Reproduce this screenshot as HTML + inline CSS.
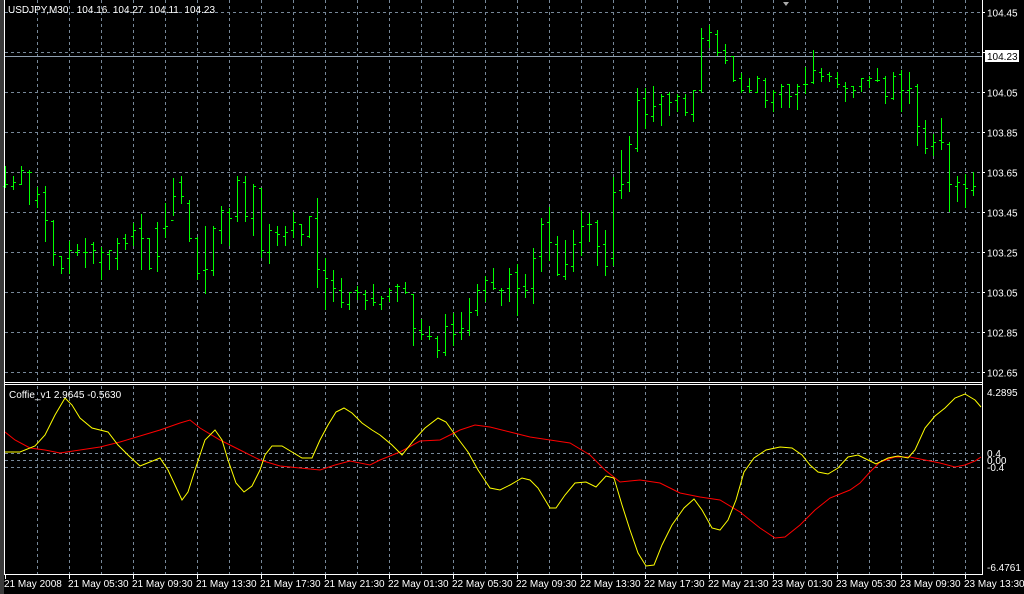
<!DOCTYPE html>
<html><head><meta charset="utf-8"><style>
html,body{margin:0;padding:0;background:#000;width:1024px;height:594px;overflow:hidden}
svg{display:block}
text{font-family:"Liberation Sans",sans-serif;font-size:10px;fill:#fff;white-space:pre}
</style></head><body>
<svg id="s" width="1024" height="594" xmlns="http://www.w3.org/2000/svg">
<rect width="1024" height="594" fill="#000"/>
<rect x="0" y="0" width="4" height="594" fill="#3a3a3a"/>
<g id="grid" stroke="#778899" stroke-width="1" stroke-dasharray="3,3" fill="none"></g>
<line x1="4" y1="56.5" x2="982" y2="56.5" stroke="#8f9fb0" stroke-width="1"/>
<g id="bars" stroke="#00ff00" stroke-width="1" fill="none"></g>
<polyline id="red" fill="none" stroke="#ff0000" stroke-width="1"/>
<polyline id="yel" fill="none" stroke="#ffff00" stroke-width="1"/>
<g stroke="#fff" stroke-width="1" fill="none">
<line x1="4.5" y1="0" x2="4.5" y2="575"/>
<line x1="982.5" y1="0" x2="982.5" y2="575"/>
<line x1="4" y1="382.5" x2="983" y2="382.5"/>
<line x1="4" y1="384.5" x2="983" y2="384.5"/>
<line x1="4" y1="574.5" x2="983" y2="574.5"/>
</g>
<g id="ticks" stroke="#fff"></g>
<text x="8" y="13" xml:space="preserve">USDJPY,M30   104.16  104.27  104.11  104.23</text>
<text x="9" y="398">Coffie_v1 2.9645 -0.5630</text>
<g id="plab"></g>
<rect x="985" y="50" width="34" height="12" fill="#fff"/>
<text x="987" y="60" style="fill:#000">104.23</text>
<text x="987" y="396">4.2895</text>
<text x="987" y="457">0.4</text>
<text x="987" y="464">0.00</text>
<text x="987" y="471">-0.4</text>
<text x="987" y="571">-6.4761</text>
<g id="tlab"></g>
<polygon points="783,2 789,2 786,6" fill="#aaa"/>
</svg>
<script>
var NS="http://www.w3.org/2000/svg";
function el(p,t,a,txt){var e=document.createElementNS(NS,t);for(var k in a)e.setAttribute(k,a[k]);if(txt)e.textContent=txt;document.getElementById(p).appendChild(e);}
for(var x=37;x<982;x+=32){el("grid","line",{x1:x+.5,y1:0,x2:x+.5,y2:381});el("grid","line",{x1:x+.5,y1:386,x2:x+.5,y2:574});}
var pl=["104.45","104.25","104.05","103.85","103.65","103.45","103.25","103.05","102.85","102.65"];
for(var i=0;i<10;i++){var y=Math.round(12.3+40*i)+.5;el("grid","line",{x1:5,y1:y,x2:982,y2:y});
 el("ticks","line",{x1:982,y1:y,x2:985,y2:y});
 if(i!=1)el("plab","text",{x:987,y:y+4},pl[i]);}
[453.5,460.5,467.5].forEach(function(y){el("grid","line",{x1:5,y1:y,x2:982,y2:y});});
var tl=["21 May 2008","21 May 05:30","21 May 09:30","21 May 13:30","21 May 17:30","21 May 21:30","22 May 01:30","22 May 05:30","22 May 09:30","22 May 13:30","22 May 17:30","22 May 21:30","23 May 01:30","23 May 05:30","23 May 09:30","23 May 13:30"];
for(var k=0;k<16;k++){var tx=5+64*k;el("ticks","line",{x1:tx+.5,y1:575,x2:tx+.5,y2:579});el("tlab","text",{x:tx-1,y:587},tl[k]);}
var B=[[166,187,186,184],[176,189,186,182],[166,184,184,170],[170,204,172,172],[187,207,200,194],[186,241,192,220],[220,265,221,254],[256,273,256,268],[241,273,258,250],[244,255,252,250],[238,267,252,252],[242,263,244,250],[247,279,262,252],[250,269,254,250],[238,269,258,243],[234,249,238,243],[223,245,236,230],[214,269,228,238],[238,269,238,268],[222,271,228,256],[203,237,228,226],[178,215,220,196],[176,203,182,196],[200,241,203,238],[237,279,238,273],[226,293,270,269],[226,275,270,228],[206,243,230,210],[208,245,212,218],[176,221,216,180],[176,221,182,216],[184,235,218,186],[188,257,188,250],[224,263,252,230],[226,245,232,234],[226,245,236,232],[212,237,230,222],[224,245,224,234],[216,237,236,216],[198,287,218,269],[258,309,270,278],[270,301,280,288],[278,307,290,302],[292,309,304,292],[286,299,290,292],[290,309,294,300],[284,305,298,302],[296,309,304,298],[288,301,296,290],[284,301,286,286],[282,293,288,292],[294,345,294,328],[319,339,330,334],[326,339,336,336],[336,357,338,350],[314,355,352,326],[313,345,324,334],[312,339,332,328],[298,335,330,312],[284,315,310,290],[276,301,290,280],[268,289,282,288],[288,305,290,290],[268,301,288,274],[264,315,272,288],[274,297,286,290],[248,303,288,258],[218,271,256,224],[207,260,222,242],[236,275,244,274],[240,279,276,264],[230,271,266,244],[211,255,242,226],[213,241,224,224],[220,265,222,246],[230,275,244,266],[177,265,258,192],[150,198,190,184],[136,191,182,144],[88,151,148,100],[88,128,98,114],[86,121,116,106],[94,125,104,96],[92,115,94,102],[94,111,100,96],[94,115,98,112],[90,121,114,90],[28,92,90,38],[25,47,40,32],[30,55,34,52],[44,63,50,60],[56,81,56,80],[73,92,78,90],[78,92,86,90],[76,92,92,78],[78,107,80,100],[90,111,102,92],[84,107,94,86],[84,107,84,96],[84,109,94,86],[67,93,84,84],[50,83,82,70],[68,81,72,76],[72,81,74,76],[72,87,78,84],[82,101,86,88],[86,97,86,90],[78,91,86,78],[76,87,80,78],[68,81,80,80],[76,103,78,96],[72,99,98,76],[70,111,74,90],[72,103,90,88],[84,145,86,126],[120,153,128,148],[134,155,146,142],[118,149,140,142],[142,211,144,184],[176,201,186,182],[174,207,184,188],[172,195,190,186]];
for(var i=0;i<B.length;i++){var x=5+8*i+.5,b=B[i];
 el("bars","line",{x1:x,y1:b[0],x2:x,y2:b[1]+1});
 el("bars","line",{x1:x-2.5,y1:b[2]+.5,x2:x,y2:b[2]+.5});
 if(x<980)el("bars","line",{x1:x,y1:b[3]+.5,x2:x+2.5,y2:b[3]+.5});}
document.getElementById("yel").setAttribute("points","5,452 20,452 35,446 45,435 55,415 65,398 72,405 80,418 92,428 108,432 118,445 128,455 140,466 150,462 160,458 168,470 175,485 182,500 188,492 195,470 205,440 215,430 222,440 228,460 236,483 244,492 252,486 260,470 265,455 272,446 282,446 292,452 302,458 312,458 320,440 328,425 336,412 344,408 352,413 362,423 372,430 380,435 392,445 402,455 414,440 425,428 438,418 446,422 456,436 468,452 478,470 490,488 500,490 510,485 522,478 530,480 538,488 550,508 556,508 565,495 575,483 586,482 596,487 606,476 614,478 622,505 630,530 638,553 646,566 654,565 662,545 672,525 684,508 694,499 702,510 712,528 720,530 728,520 736,500 744,472 754,458 766,450 780,447 792,448 802,455 810,465 818,472 828,474 838,468 848,457 858,455 868,460 876,464 888,458 898,456 908,458 915,450 925,428 935,416 945,408 955,398 965,394 975,400 981,407");
document.getElementById("red").setAttribute("points","5,432 15,440 30,448 45,450 60,453 80,450 100,447 120,442 140,436 160,430 180,423 190,420 200,428 220,440 240,450 260,460 280,466 300,468 320,470 335,465 350,461 370,465 380,460 400,452 420,441 440,440 460,430 475,425 490,427 510,432 530,437 550,440 570,443 590,455 605,470 620,482 640,480 660,483 680,493 700,497 720,500 740,512 760,528 775,538 785,537 800,525 815,510 830,498 850,490 860,483 870,472 880,462 895,457 910,457 925,460 940,463 955,467 965,465 975,461 981,457");
</script>
</body></html>
